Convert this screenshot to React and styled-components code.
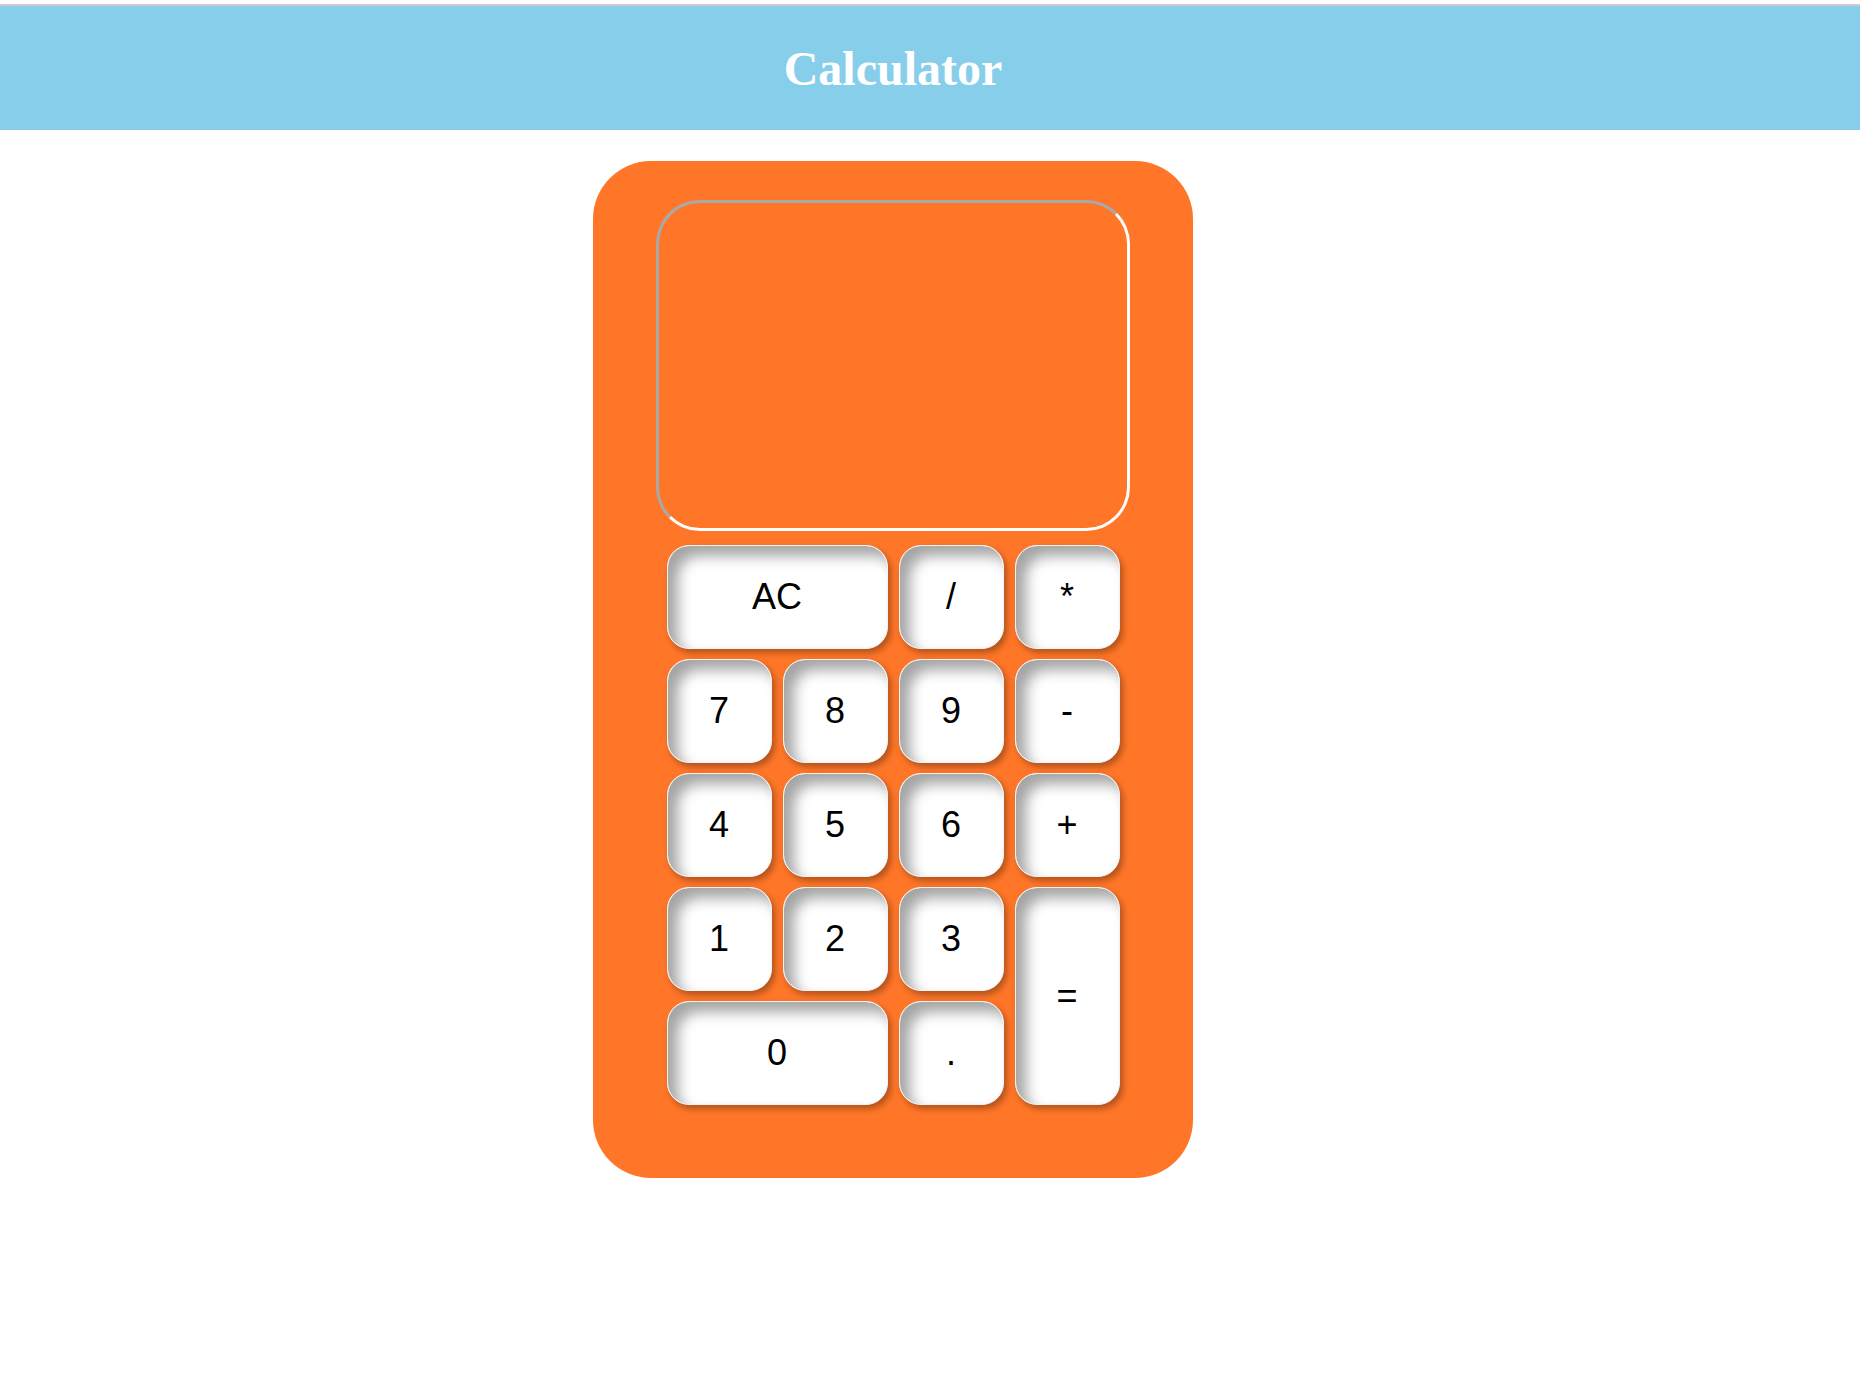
import React from 'react'
import styled, { createGlobalStyle } from 'styled-components';

const GlobalStyle = createGlobalStyle`
  body {
    margin: 0;
    padding-top: 4px;
    background: #fff;
    font-family: "Liberation Serif", serif;
  }
`;

const Header = styled.header`
  height: 126px;
  border-top: 2px solid #cccccc;
  background: #87ceeb;
  display: flex;
  align-items: center;
  justify-content: center;
  padding: 0 74px 0 0;
  box-sizing: border-box;

  h1 {
    margin: 0;
    color: #fff;
    font-family: "Liberation Serif", "Times New Roman", serif;
    font-size: 48px;
    font-weight: bold;
  }
`;

const Body = styled.main`
  padding: 31px 0 0 593px;
`;

const Case = styled.div`
  width: 600px;
  box-sizing: border-box;
  padding: 39px 0 73px;
  background: #ff7628;
  border-radius: 58px;
  display: flex;
  flex-flow: column;
  align-items: center;
  gap: 14px;
`;

const Screen = styled.div`
  width: 474px;
  height: 331px;
  box-sizing: border-box;
  border-radius: 44px;
  border: 3px solid;
  border-color: #a9a9a9 #ffffff #ffffff #a9a9a9;
`;

const Keypad = styled.div`
  display: grid;
  grid-template-columns: repeat(4, 105px);
  grid-auto-rows: 104px;
  column-gap: 11px;
  row-gap: 10px;
`;

const Key = styled.button`
  grid-column: span ${props => props.$wide ? 2 : 1};
  grid-row: span ${props => props.$tall ? 2 : 1};
  border: 1px solid #f4f4f4;
  border-radius: 22px;
  background: #fff;
  box-shadow: inset 10px 10px 14px rgba(0, 0, 0, 0.36), 3px 4px 6px rgba(0, 0, 0, 0.3);
  font-family: "Liberation Sans", Arial, sans-serif;
  font-size: 36px;
  color: #000;
  display: flex;
  align-items: center;
  justify-content: center;
  padding: 0;
  cursor: pointer;
`;

const keys = [
    { label: 'AC', wide: true },
    { label: '/' },
    { label: '*' },
    { label: '7' },
    { label: '8' },
    { label: '9' },
    { label: '-' },
    { label: '4' },
    { label: '5' },
    { label: '6' },
    { label: '+' },
    { label: '1' },
    { label: '2' },
    { label: '3' },
    { label: '=', tall: true },
    { label: '0', wide: true },
    { label: '.' },
];

export default function App() {
    return (
        <>
            <GlobalStyle />
            <Header>
                <h1>Calculator</h1>
            </Header>
            <Body>
                <Case>
                    <Screen />
                    <Keypad>
                        {keys.map(k => (
                            <Key key={k.label} $wide={k.wide} $tall={k.tall}>{k.label}</Key>
                        ))}
                    </Keypad>
                </Case>
            </Body>
        </>
    )
}
